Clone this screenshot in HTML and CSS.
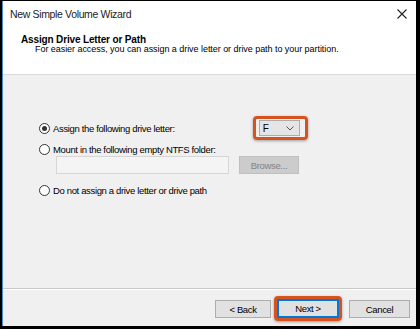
FILE: index.html
```html
<!DOCTYPE html>
<html>
<head>
<meta charset="utf-8">
<link rel="stylesheet" href="styles.css">
</head>
<body>
<div class="window">
  <div class="titlebar">
    <span class="title">New Simple Volume Wizard</span>
    <svg class="close" width="10" height="10" viewBox="0 0 10 10"><path d="M0.5 0.5L9.5 9.5M9.5 0.5L0.5 9.5" stroke="#222" stroke-width="1.1" fill="none"/></svg>
  </div>
  <div class="header">
    <div class="h-title">Assign Drive Letter or Path</div>
    <div class="h-sub">For easier access, you can assign a drive letter or drive path to your partition.</div>
  </div>
  <div class="content">
    <div class="row row1">
      <label class="opt"><span class="radio checked"></span>Assign the following drive letter:</label>
      <div class="hl hl-combo">
        <div class="combo"><span>F</span>
          <svg width="8" height="5" viewBox="0 0 8 5"><path d="M0.5 0.5L4 4L7.5 0.5" stroke="#555" stroke-width="1" fill="none"/></svg>
        </div>
      </div>
    </div>
    <label class="opt row2"><span class="radio"></span>Mount in the following empty NTFS folder:</label>
    <div class="folder-row">
      <div class="field"></div>
      <div class="btn disabled">Browse...</div>
    </div>
    <label class="opt row3"><span class="radio"></span>Do not assign a drive letter or drive path</label>
  </div>
  <div class="footer">
    <div class="btn back">&lt; Back</div>
    <div class="hl hl-next"><div class="btn next">Next &gt;</div></div>
    <div class="btn cancel">Cancel</div>
  </div>
</div>
</body>
</html>
```
FILE: styles.css
```css
html, body {
  margin: 0;
  padding: 0;
  background: #000;
  width: 420px;
  height: 329px;
  overflow: hidden;
}
body {
  padding: 1px 0 0 2px;
  box-sizing: border-box;
  font-family: "Liberation Sans", Arial, sans-serif;
  font-size: 10px;
  color: #000;
  letter-spacing: -0.35px;
}
.window {
  width: 414px;
  height: 325px;
  background: #f0f0f0;
  border-left: 1px solid #4a8cc7;
  box-sizing: border-box;
  display: flex;
  flex-direction: column;
}
.titlebar {
  height: 26px;
  background: #fff;
  display: flex;
  align-items: center;
  justify-content: space-between;
  padding: 0 9px 0 7px;
}
.title {
  font-size: 10.5px;
  color: #222;
}
.header {
  background: #fff;
  height: 48px;
  box-sizing: border-box;
  padding: 7px 0 0 18px;
  border-bottom: 1px solid #d9d9d9;
}
.h-title {
  font-weight: bold;
  font-size: 10px;
  line-height: 12px;
  letter-spacing: -0.15px;
}
.h-sub {
  padding-left: 14px;
  font-size: 9px;
  line-height: 11px;
  margin-top: -2px;
  letter-spacing: -0.05px;
}
.content {
  flex: 1;
  padding: 46px 0 0 36px;
  border-bottom: 1px solid #c9c9c9;
  box-shadow: 0 1px 0 #fff;
}
.opt {
  display: flex;
  align-items: center;
  height: 14px;
  font-size: 9.5px;
}
.radio {
  width: 11px;
  height: 11px;
  border: 1px solid #333;
  border-radius: 50%;
  box-sizing: border-box;
  background: #fff;
  margin-right: 3px;
  position: relative;
  flex: none;
}
.radio.checked::after {
  content: "";
  position: absolute;
  left: 2px;
  top: 2px;
  width: 5px;
  height: 5px;
  border-radius: 50%;
  background: #333;
}
.row1 {
  display: flex;
  align-items: center;
  height: 14px;
}
.hl {
  border: 3px solid #d4531f;
  border-radius: 4px;
  box-shadow: 0 1px 3px rgba(0,0,0,0.35);
}
.hl-combo {
  margin-left: 78px;
  padding: 1px 5px 1px 3px;
}
.combo {
  width: 41px;
  height: 16px;
  box-sizing: border-box;
  background: #e5e5e5;
  border: 1px solid #acacac;
  display: flex;
  align-items: center;
  justify-content: space-between;
  padding: 0 5px 0 3px;
  font-size: 10px;
}
.row2 {
  margin-top: 7px;
}
.folder-row {
  display: flex;
  padding-left: 17px;
  gap: 10px;
}
.field {
  width: 173px;
  height: 18px;
  box-sizing: border-box;
  border: 1px solid #d6d6d6;
  background: #f4f4f4;
}
.btn {
  height: 18px;
  box-sizing: border-box;
  background: #e1e1e1;
  border: 1px solid #adadad;
  display: flex;
  align-items: center;
  justify-content: center;
  font-size: 9.5px;
  color: #000;
}
.btn.disabled {
  width: 60px;
  background: #cccccc;
  border-color: #bfbfbf;
  color: #838383;
}
.row3 {
  margin-top: 9px;
}
.footer {
  height: 37px;
  display: flex;
  align-items: flex-start;
  padding: 11px 0 0 212px;
  box-sizing: border-box;
}
.back {
  width: 56px;
}
.hl-next {
  margin-left: 3px;
  margin-top: -4px;
  padding: 0;
  border-radius: 4px;
}
.next {
  width: 62px;
  height: 19px;
  border: 2px solid #0078d7;
}
.cancel {
  width: 61px;
  margin-left: 7px;
}
```
